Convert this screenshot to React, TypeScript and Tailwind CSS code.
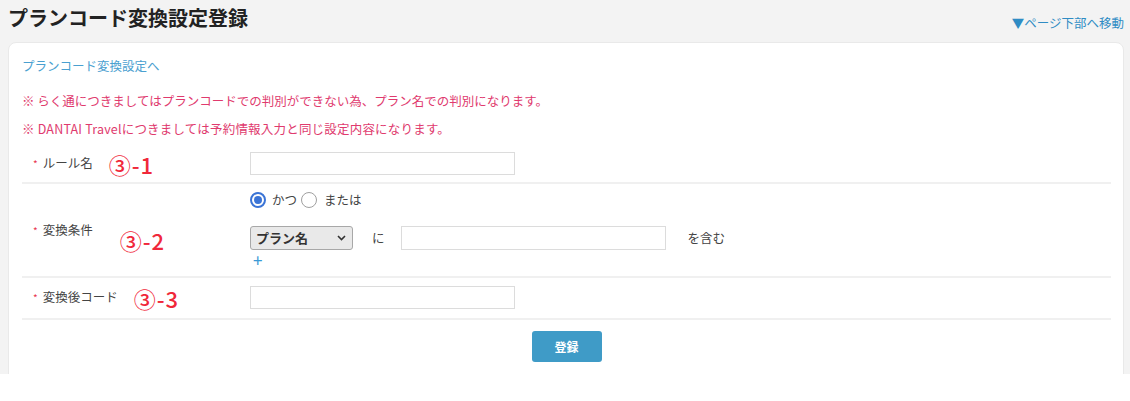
import React from "react";

const jp = { fontFamily: '"Noto Sans CJK JP", "Noto Sans", sans-serif' };

function Radio({ checked }: { checked?: boolean }) {
  return checked ? (
    <span className="flex h-[16px] w-[16px] shrink-0 items-center justify-center rounded-full border-2 border-[#3b74d6] bg-white">
      <span className="block h-[8px] w-[8px] rounded-full bg-[#3b74d6]" />
    </span>
  ) : (
    <span className="block h-[16px] w-[16px] shrink-0 rounded-full border border-[#a0a0a0] bg-white" />
  );
}

function Label({ text }: { text: string }) {
  return (
    <span className="flex items-center text-[12.5px] text-[#444]">
      <span className="mr-[5px] text-[10px] text-[#e8354f]">*</span>
      {text}
    </span>
  );
}

function Note({ children, className }: { children: React.ReactNode; className?: string }) {
  return (
    <span className={"font-medium text-[22px] leading-none tracking-[1px] text-[#f0283a] " + (className ?? "")}>
      {children}
    </span>
  );
}

export default function App() {
  return (
    <div className="h-[401px] w-[1130px] overflow-hidden bg-white" style={jp}>
      <div className="h-[374px] overflow-hidden bg-[#f3f3f3] pl-[8px] pr-[6px]">
        <div className="flex h-[42px] items-start justify-between">
          <h1 className="mt-[5px] text-[20px] font-bold leading-[25px] text-[#222]">プランコード変換設定登録</h1>
          <a className="mt-[15px] text-[12.5px] leading-[16px] text-[#2f8cc4]">▼ページ下部へ移動</a>
        </div>
        <div className="h-[340px] rounded-t-[8px] border border-[#e9e9e9] bg-white pl-[13px] pr-[12px] pt-[15px]">
          <div className="text-[12.5px] leading-[16px] text-[#4aa0d0]">プランコード変換設定へ</div>
          <div className="mt-[19px] text-[12.5px] leading-[16px] text-[#e03a6e]">
            ※ らく通につきましてはプランコードでの判別ができない為、プラン名での判別になります。
          </div>
          <div className="mt-[12px] text-[12.5px] leading-[16px] tracking-[0.2px] text-[#e03a6e]">
            ※ DANTAI Travelにつきましては予約情報入力と同じ設定内容になります。
          </div>

          {/* row 1 */}
          <div className="flex border-b-2 border-[#f0f0f0] pb-[7px] pt-[15px]">
            <div className="flex w-[228px] items-center pl-[11px]">
              <Label text="ルール名" />
              <Note className="ml-[16px]">③-1</Note>
            </div>
            <div className="h-[23px] w-[265px] border border-[#dcdcdc] bg-white" />
          </div>

          {/* row 2 */}
          <div className="flex border-b-2 border-[#f0f0f0] pb-[8px] pt-[8px]">
            <div className="flex w-[228px] items-center pl-[11px]">
              <Label text="変換条件" />
              <Note className="ml-[27px] mt-[20px]">③-2</Note>
            </div>
            <div className="flex flex-col">
              <div className="flex h-[16px] items-center text-[12.5px] text-[#444]">
                <Radio checked />
                <span className="ml-[6px]">かつ</span>
                <span className="ml-[4px]"><Radio /></span>
                <span className="ml-[7px]">または</span>
              </div>
              <div className="mt-[18px] flex items-center text-[12.5px] text-[#444]">
                <div className="flex h-[24px] w-[103px] items-center justify-between rounded-[3px] border border-[#a8a8a8] bg-[#e9e9e9] pl-[5px] pr-[6px]">
                  <span className="text-[13px] font-bold text-[#333]">プラン名</span>
                  <svg width="9" height="6" viewBox="0 0 9 6" fill="none">
                    <path d="M1 1l3.5 3.5L8 1" stroke="#333" strokeWidth="1.6" />
                  </svg>
                </div>
                <span className="ml-[19px]">に</span>
                <div className="ml-[16px] h-[24px] w-[265px] border border-[#dcdcdc] bg-white" />
                <span className="ml-[22px]">を含む</span>
              </div>
              <div className="ml-[3px] mt-[1px] text-[17px] leading-[17px] text-[#3a9ad6]">+</div>
            </div>
          </div>

          {/* row 3 */}
          <div className="flex border-b-2 border-[#f0f0f0] pb-[9px] pt-[8px]">
            <div className="flex w-[228px] items-center pl-[11px]">
              <Label text="変換後コード" />
              <Note className="ml-[16px]">③-3</Note>
            </div>
            <div className="h-[23px] w-[265px] border border-[#dcdcdc] bg-white" />
          </div>

          <div className="mt-[11px] flex justify-center">
            <button className="h-[31px] w-[70px] rounded-[3px] bg-[#3f9bc7] text-[12px] font-bold text-white">
              登録
            </button>
          </div>
        </div>
      </div>
    </div>
  );
}
